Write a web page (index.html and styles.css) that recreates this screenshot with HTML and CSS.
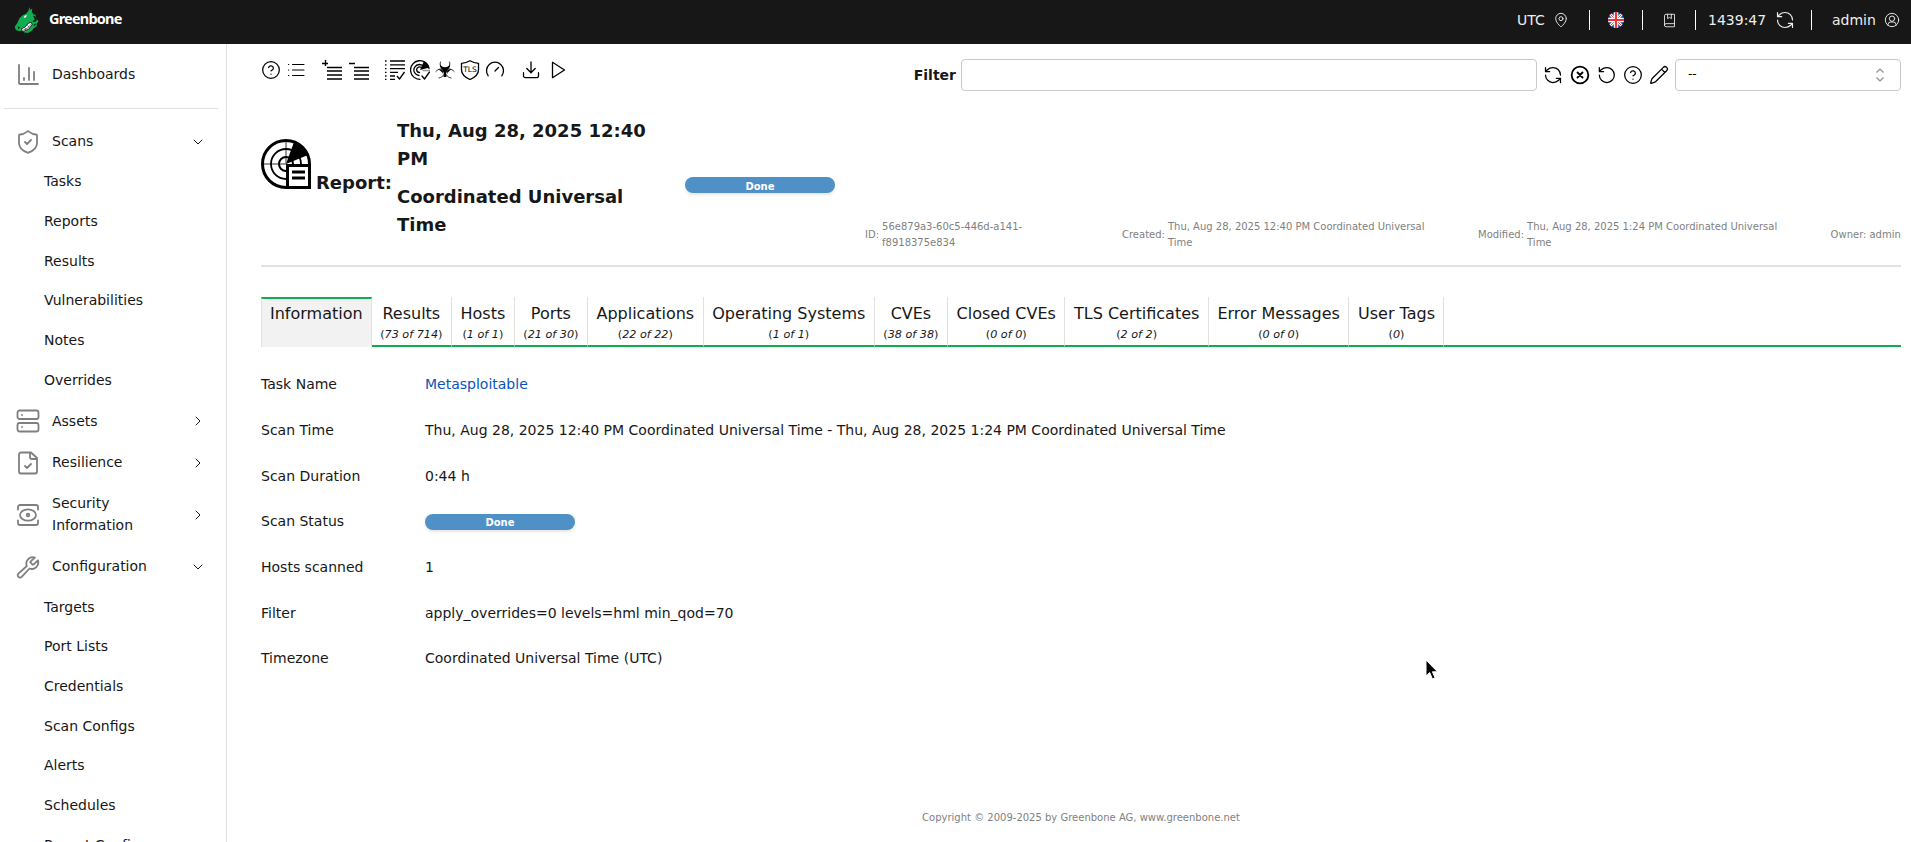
FILE: index.html
```html
<!DOCTYPE html>
<html lang="en">
<head>
<meta charset="utf-8">
<title>Greenbone - Report</title>
<link rel="stylesheet" href="styles.css">
</head>
<body>
<svg class="sprite" aria-hidden="true">
  <symbol id="help" viewBox="0 0 24 24"><circle cx="12" cy="12" r="10"/><path d="M9.1 9a3 3 0 0 1 5.8 1c0 2-2.9 3-2.9 3M12 17h.01"/></symbol>
  <symbol id="refresh" viewBox="0 0 24 24"><path d="M21 12a9 9 0 0 0-9-9 9.75 9.75 0 0 0-6.74 2.74L3 8M3 3v5h5M3 12a9 9 0 0 0 9 9 9.75 9.75 0 0 0 6.74-2.74L21 16M16 16h5v5"/></symbol>
  <symbol id="down" viewBox="0 0 24 24"><path d="m6 9 6 6 6-6"/></symbol>
  <symbol id="right" viewBox="0 0 24 24"><path d="m9 18 6-6-6-6"/></symbol>
</svg>
<header class="topbar">
  <div class="brand">
    <svg class="logo" viewBox="0 0 26 28">
      <path fill="#11ab51" d="M15.500 0 16.200 3 18.500 1.500 18 5 19.500 7.500 22 8 22 11 25 15 23 17 23 20 20 22 18 24.500 14 27 10 26.500 9 24.500 5 25 1.500 24 .3 20.500 3 16.500 5 12 8.500 8.500 12 7 14.500 4Z"/>
      <path fill="#171717" d="m19.500 9 1.500 4-2.500 2.500 3.500-.5 1.500-2-2.500-4ZM3.500 21.500l1.200-1.500.8 1.500-1.200 1.200ZM21.500 17l-2 2 .8.800 2-2Z"/>
      <path fill="#fff" d="m9.500 11.500 1-2.500 2.300-.8-.8 2.500Z"/>
      <path fill="#fff" stroke="#171717" stroke-width=".9" d="m7.500 22.500 3.500-1.700 3.500-4 3-.8.800 2.300-3.300 4.500-5.500 2.500-2-.8Z"/>
      <path fill="none" stroke="#171717" stroke-width=".6" d="m9 24 4.500-2 4-4.500M11 21.500l1 2.500M13.500 19l2 2.500"/>
    </svg>
    <span>Greenbone</span>
  </div>
  <div class="userbar">
    <div class="cell tz"><span>UTC</span><svg class="ic" viewBox="0 0 24 24"><path d="M20 10c0 5-5.500 10.200-7.400 11.800a1 1 0 0 1-1.200 0C9.500 20.200 4 15 4 10a8 8 0 0 1 16 0"/><circle cx="12" cy="10" r="3"/></svg></div>
    <div class="cell flag"><svg viewBox="0 0 16 16"><clipPath id="round"><circle cx="8" cy="8" r="8"/></clipPath><g clip-path="url(#round)"><path fill="#1b4aa5" d="M0 0h16v16H0z"/><path stroke="#fff" stroke-width="2.800" d="m0 0 16 16M16 0 0 16"/><path stroke="#e33" stroke-width="1" d="m0 0 16 16M16 0 0 16"/><path stroke="#fff" stroke-width="4.400" d="M8 0v16M0 8h16"/><path stroke="#e33" stroke-width="2.200" d="M8 0v16M0 8h16"/></g></svg></div>
    <div class="cell book"><svg class="ic" viewBox="0 0 24 24"><path d="M4 19.500v-15A2.500 2.500 0 0 1 6.500 2H20v20H6.500a2.500 2.500 0 0 1 0-5H20M9 2v7l3-2 3 2V2"/></svg></div>
    <div class="cell session"><span>1439:47</span><svg class="ic"><use href="#refresh"/></svg></div>
    <div class="cell user"><span>admin</span><svg class="ic" viewBox="0 0 24 24"><circle cx="12" cy="12" r="10"/><circle cx="12" cy="10" r="4"/><path d="M6 20v-1.500a4 4 0 0 1 4-3.500h4a4 4 0 0 1 4 3.500V20"/></svg></div>
  </div>
</header>
<div class="shell">
  <nav class="sidebar">
    <a class="item dash"><svg class="nav-ic" viewBox="0 0 24 24"><path d="M3 2v18a1 1 0 0 0 1 1h18M8 17v-2M13 17V5M18 17V9"/></svg><span>Dashboards</span></a>
    <hr>
    <a class="item"><svg class="nav-ic" viewBox="0 0 24 24"><path d="M21 13c0 5-4 8-8.600 9.700a1 1 0 0 1-.8 0C7 21 3 18 3 13V5.500a1 1 0 0 1 1-1c2.300 0 5-1.200 7.200-2.900a1.200 1.200 0 0 1 1.600 0C15 3.300 17.700 4.500 20 4.500a1 1 0 0 1 1 1zM9 12l2 2 4-4"/></svg><span>Scans</span><svg class="chev"><use href="#down"/></svg></a>
    <a class="sub">Tasks</a><a class="sub">Reports</a><a class="sub">Results</a><a class="sub">Vulnerabilities</a><a class="sub">Notes</a><a class="sub">Overrides</a>
    <a class="item"><svg class="nav-ic" viewBox="0 0 24 24"><rect x="1.500" y="1.500" width="21" height="8.500" rx="2"/><rect x="1.500" y="14" width="21" height="8.500" rx="2"/><path d="M6 6h.01M6 18h.01"/></svg><span>Assets</span><svg class="chev"><use href="#right"/></svg></a>
    <a class="item"><svg class="nav-ic" viewBox="0 0 24 24"><path d="M15 1.500H5a2 2 0 0 0-2 2v17a2 2 0 0 0 2 2h14a2 2 0 0 0 2-2V7zM14 1.500V6a2 2 0 0 0 2 2h5M9 15l2 2 4-4"/></svg><span>Resilience</span><svg class="chev"><use href="#right"/></svg></a>
    <a class="item"><svg class="nav-ic" viewBox="0 0 24 24"><path d="M2 6.500V4a2 2 0 0 1 2-2h16a2 2 0 0 1 2 2v2.500M2 17.500V20a2 2 0 0 0 2 2h16a2 2 0 0 0 2-2v-2.500"/><ellipse cx="12" cy="12" rx="8" ry="5.700"/><circle cx="12" cy="12" r="1.300"/></svg><span>Security Information</span><svg class="chev"><use href="#right"/></svg></a>
    <a class="item"><svg class="nav-ic" viewBox="0 0 24 24"><path d="M14.700 6.300a1 1 0 0 0 0 1.400l1.600 1.600a1 1 0 0 0 1.400 0l4.200-4a6.500 6.500 0 0 1-8.400 8.200l-7.800 8.400a2.120 2.120 0 0 1-3.200-3.200l8.300-7.700a6.500 6.500 0 0 1 8.100-8.500z"/></svg><span>Configuration</span><svg class="chev"><use href="#down"/></svg></a>
    <a class="sub">Targets</a><a class="sub">Port Lists</a><a class="sub">Credentials</a><a class="sub">Scan Configs</a><a class="sub">Alerts</a><a class="sub">Schedules</a><a class="sub">Report Configs</a>
  </nav>
  <main class="main">
    <div class="tools">
      <div class="icons">
        <div class="group">
          <svg class="ic round"><use href="#help"/></svg>
          <svg class="ic thin" viewBox="0 0 20 20"><path d="M6.500 4.500H18M6.500 10H18M6.500 15.500H18M2.500 4.500h.3M2.500 10h.3M2.500 15.500h.3"/></svg>
        </div>
        <div class="group wide">
          <svg class="ic" viewBox="0 0 20 20"><path d="M0 3.500h6M3.500 0v6M5 7.500h15M5 11h15M5 15h15M5 19h15"/></svg>
          <svg class="ic" viewBox="0 0 20 20"><path d="M0 3.500h6M5 7.500h15M5 11h15M5 15h15M5 19h15"/></svg>
        </div>
        <div class="group">
          <svg class="ic" viewBox="0 0 20 20"><path stroke-linecap="butt" d="M5 1h15M5 4.800h15M5 8.600h15M5 12.400h8M5 16h5M5 19.300h5M0 1h1.500M0 4.800h1.500M0 8.600h1.500M0 12.400h1.500M0 16h1.500M0 19.300h1.500M12 16l2.500 3L19.500 12"/></svg>
          <svg class="ic" viewBox="0 0 20 20"><path d="M19 8.500A9.300 9.300 0 1 0 10 19.300M14 7A5.500 5.500 0 1 0 9 15.500M12 8.500A2.800 2.800 0 1 0 9.500 12.500M12 16l2.500 3L19.500 12"/><path fill="#000" stroke="none" d="m10 10 4-9Q18 3 19.500 7.500Z"/><path stroke="#999" d="M13 10.500h6.500"/></svg>
          <svg class="ic bio" viewBox="0 0 20 20"><path d="M5.500 2C4 5.500 6.500 8.500 10 8.500S16 5.500 14.500 2M.8 11.500c3-3.500 7-3 8.200-.5s-.5 6-5 7M19.200 11.500c-3-3.500-7-3-8.200-.5s.5 6 5 7"/><path fill="#000" stroke="none" d="M5 4c1 2.500 3 3.200 5 3.200S14 6.500 15 4c.3 3-.8 4.500-2.300 5.500L11 13.500l.5 3.500h-3l.5-3.500-1.700-4C5.800 8.500 4.700 7 5 4ZM3 9.500q4-1 5 1.500l-.5 3q-.5-3-4.500-4.500ZM17 9.500q-4-1-5 1.500l.5 3q.5-3 4.500-4.500Z"/></svg>
          <svg class="ic" viewBox="0 0 20 20"><path d="M10 .8c2.600 1.700 5.400 2.400 8.500 2.500v6.500c0 4.500-3.500 7.600-8.500 9.700-5-2.100-8.500-5.200-8.500-9.700V3.300C4.600 3.200 7.400 2.500 10 .8Z"/><text x="10" y="11.800" text-anchor="middle">TLS</text></svg>
          <svg class="ic" viewBox="0 0 20 20"><path d="M3.200 15.800a8.500 8.500 0 1 1 13.600 0M10 11l3.500-3.500"/></svg>
        </div>
        <div class="group last">
          <svg class="ic" viewBox="0 0 20 20"><path d="M10 2v10.500M5.800 8.500 10 12.700l4.200-4.200M2.500 12.700v3a2 2 0 0 0 2 2h11a2 2 0 0 0 2-2v-3"/></svg>
          <svg class="ic" viewBox="0 0 20 20"><path d="M6.500 2.300v15.400L18.500 10Z"/></svg>
        </div>
      </div>
      <div class="filter">
        <label>Filter</label>
        <div class="field"></div>
        <div class="filter-icons">
          <svg class="ic"><use href="#refresh"/></svg>
          <svg class="ic bold" viewBox="0 0 24 24"><circle cx="12" cy="12" r="10"/><path d="m15 9-6 6M9 9l6 6"/></svg>
          <svg class="ic" viewBox="0 0 24 24"><path d="M4 12a9 9 0 1 0 9-9 9.750 9.750 0 0 0-6.740 2.740L4 8M4 3v5h5"/></svg>
          <svg class="ic"><use href="#help"/></svg>
          <svg class="ic" viewBox="0 0 24 24"><path d="M21.170 6.830a1 1 0 0 0-4-4L3.840 16.170a2 2 0 0 0-.5.830l-1.320 4.350a.5.5 0 0 0 .62.620l4.350-1.320a2 2 0 0 0 .83-.5zM15 5l4 4"/></svg>
        </div>
        <div class="select"><span>--</span><svg viewBox="0 0 10 14"><path d="m1.500 4.500 3.500-3.500 3.500 3.500M1.500 9.500 5 13l3.500-3.500"/></svg></div>
      </div>
    </div>
    <section class="head">
      <svg class="report-ic" viewBox="0 0 50 50">
        <g fill="none" stroke="#000"><path stroke="#777" stroke-width="1.500" d="M25 3v22M3 25h22"/><circle cx="25" cy="25" r="7" stroke-width="2"/><circle cx="25" cy="25" r="15" stroke-width="1.800"/><path stroke-width="3" d="M48.500 26V25A23.500 23.500 0 1 0 25 48.500"/></g>
        <path d="m25 25 8-22q9 3 14 13Z"/><path fill="#fff" stroke="#000" stroke-width="3" d="M26.500 26.500h22v22h-22z"/><path stroke="#000" stroke-width="2.800" d="M31 33h13M31 39h13"/>
      </svg>
      <h2 class="kind">Report:</h2>
      <h2 class="when"><span>Thu, Aug 28, 2025 12:40 PM</span><span>Coordinated Universal Time</span></h2>
      <div class="pill">Done</div>
      <dl class="meta">
        <div class="m-id"><dt>ID:</dt><dd>56e879a3-60c5-446d-a141-f8918375e834</dd></div>
        <div class="m-created"><dt>Created:</dt><dd>Thu, Aug 28, 2025 12:40 PM Coordinated Universal Time</dd></div>
        <div class="m-mod"><dt>Modified:</dt><dd>Thu, Aug 28, 2025 1:24 PM Coordinated Universal Time</dd></div>
        <div class="m-owner"><dt>Owner:</dt><dd>admin</dd></div>
      </dl>
    </section>
    <div class="tabs">
      <div class="tab active">Information</div>
      <div class="tab">Results<small>(<i>73 of 714</i>)</small></div>
      <div class="tab">Hosts<small>(<i>1 of 1</i>)</small></div>
      <div class="tab">Ports<small>(<i>21 of 30</i>)</small></div>
      <div class="tab">Applications<small>(<i>22 of 22</i>)</small></div>
      <div class="tab">Operating Systems<small>(<i>1 of 1</i>)</small></div>
      <div class="tab">CVEs<small>(<i>38 of 38</i>)</small></div>
      <div class="tab">Closed CVEs<small>(<i>0 of 0</i>)</small></div>
      <div class="tab">TLS Certificates<small>(<i>2 of 2</i>)</small></div>
      <div class="tab">Error Messages<small>(<i>0 of 0</i>)</small></div>
      <div class="tab">User Tags<small>(<i>0</i>)</small></div>
      <div class="rest"></div>
    </div>
    <dl class="info">
      <dt>Task Name</dt><dd><a>Metasploitable</a></dd>
      <dt>Scan Time</dt><dd>Thu, Aug 28, 2025 12:40 PM Coordinated Universal Time - Thu, Aug 28, 2025 1:24 PM Coordinated Universal Time</dd>
      <dt>Scan Duration</dt><dd>0:44 h</dd>
      <dt>Scan Status</dt><dd class="status"><div class="pill">Done</div></dd>
      <dt>Hosts scanned</dt><dd>1</dd>
      <dt>Filter</dt><dd>apply_overrides=0 levels=hml min_qod=70</dd>
      <dt>Timezone</dt><dd>Coordinated Universal Time (UTC)</dd>
    </dl>
    <footer>Copyright © 2009-2025 by Greenbone AG, www.greenbone.net</footer>
  </main>
</div>
<svg class="cursor" viewBox="0 0 14 22"><path fill="#000" stroke="#fff" d="M1 1v16l3.700-3.500L7.400 20l2.700-1.200-2.700-6H12.500Z"/></svg>
</body>
</html>
```

FILE: styles.css
```css
* { box-sizing: border-box; }
body { margin: 0; height: 842px; overflow: hidden; background: #fff; color: #171717; font: 14px/21.7px "DejaVu Sans", sans-serif; }
.sprite { display: none; }
svg { display: block; flex: none; }
dl, dd, dt, h2 { margin: 0; }
.ic { width: 20px; height: 20px; fill: none; stroke: currentColor; stroke-width: 1.5; stroke-linecap: round; stroke-linejoin: round; }

.topbar { height: 44px; background: #171717; color: #fff; display: flex; justify-content: space-between; }
.brand { display: flex; align-items: flex-start; padding: 7px 0 0 14px; gap: 9px; }
.logo { width: 26px; height: 27px; }
.brand span { font: 700 14.5px/22px "Noto Sans", sans-serif; letter-spacing: -.8px; }
.userbar { display: flex; align-items: flex-start; padding: 10px 10px 0 0; color: #eee; }
.cell { display: flex; align-items: center; height: 20px; border-left: 1px solid #fff; }
.cell span { padding-top: 1px; }
.cell .ic { stroke-width: 1.4; }
.tz { border: 0; width: 72px; gap: 8px; }
.tz .ic, .user .ic { width: 16px; height: 16px; }
.flag { width: 53px; padding-left: 18px; }
.flag svg { width: 16px; height: 16px; }
.book { width: 53px; padding-left: 19px; }
.book .ic { width: 15px; height: 15px; }
.session { width: 116px; padding-left: 12px; gap: 9px; }
.user { width: 90px; padding-left: 20px; gap: 8px; }

.shell { display: flex; height: 798px; }
.sidebar { width: 227px; flex: none; border-right: 1px solid #e1e1e1; overflow: hidden; }
.item { display: flex; align-items: center; padding: 10.2px 20px 9.5px 16px; }
.item span { flex: 1; margin-left: 12px; max-width: 118px; }
.nav-ic { width: 24px; height: 24px; margin: -2px 0; fill: none; stroke: #7f7f7f; stroke-width: 1.8; stroke-linecap: round; stroke-linejoin: round; }
.chev { width: 16px; height: 16px; margin-left: auto; fill: none; stroke: #171717; stroke-width: 1.5; stroke-linecap: round; stroke-linejoin: round; }
.dash { margin-top: 9.8px; }
.sidebar hr { border: 0; border-top: 1px solid #e1e1e1; margin: 13px 8px 11.6px 4px; }
.sub { display: block; padding: 9px 0 9px 44px; }

.main { flex: 1; min-width: 0; padding: 0 10px 0 34px; display: flex; flex-direction: column; }
.tools { display: flex; justify-content: space-between; padding-top: 15px; color: #000; }
.icons { display: flex; gap: 16px; padding-top: 1px; }
.icons .ic { stroke-width: 1.3; }
.icons .round { stroke-width: 1.5; }
.icons .wide .ic { stroke-width: 1.4; stroke-linecap: butt; }
.icons .thin { stroke-width: 1.1; }
.icons .bio { stroke-width: .8; }
.icons text { font: 7.5px "DejaVu Sans", sans-serif; fill: #000; stroke: none; }
.group { display: flex; gap: 5px; }
.group.wide { gap: 7px; }
.filter { display: flex; align-items: center; }
.filter label { font-weight: 700; color: #171717; margin-right: 5px; padding-top: 1px; }
.field { width: 576px; height: 32px; border: 1px solid #c9c9c9; border-radius: 4px; }
.filter-icons { display: flex; gap: 6.5px; margin: 0 6px; }
.bold { stroke-width: 2.2; }
.select { width: 226px; height: 32px; border: 1px solid #c9c9c9; border-radius: 4px; display: flex; justify-content: space-between; align-items: center; padding: 0 15px 0 12px; font-size: 12px; }
.select svg { width: 10px; height: 14px; fill: none; stroke: #868e96; stroke-width: 1.2; }

.head { display: flex; height: 176px; border-bottom: 2px solid #e3e3e3; padding-top: 27px; }
.report-ic { width: 50px; height: 50px; margin-top: 21px; }
h2 { font-size: 18px; line-height: 27.9px; }
.kind { margin: 51px 0 0 5px; width: 75px; }
.when { margin-left: 6px; width: 288px; padding-right: 30px; display: flex; flex-direction: column; gap: 10px; margin-top: -1px; }
.pill { width: 150px; height: 16px; border-radius: 8px; background: #4f91c7; box-shadow: 0 2px 3px #0000001a; color: #fff; font: 700 10px/18px "DejaVu Sans", sans-serif; text-align: center; flex: none; }
.head .pill { margin-top: 59px; line-height: 19px; }
.meta { display: flex; align-items: center; align-self: flex-start; margin: 101px 0 0 30px; flex: 1; font-size: 10px; line-height: 15.5px; color: #7f7f7f; }
.meta div { display: flex; align-items: center; gap: 3px; }
.m-id { width: 257px; }
.m-id dd { width: 150px; }
.m-created { width: 356px; }
.m-created dd { width: 275px; }
.m-mod { width: 352.6px; }
.m-mod dd { width: 265px; }
.meta dd, .meta dt { flex: none; }

.tabs { display: flex; height: 50px; margin-top: 30px; }
.tab { border-right: 1px solid #e1e1e1; border-bottom: 2px solid #11ab51; padding: 5px 8.5px 0 8.55px; font-size: 16px; line-height: 24.8px; text-align: center; white-space: nowrap; }
.tab.active { border-top: 2px solid #11ab51; border-bottom: 0; border-left: 1px solid #e1e1e1; background: #f2f2f2; padding: 3px 8px 0; }
.tab small { display: block; font-size: 11.2px; line-height: 17.4px; margin-top: -1px; }
.rest { flex: 1; border-bottom: 2px solid #11ab51; }

.info { display: grid; grid-template-columns: 164px 1fr; row-gap: 24px; margin-top: 27.3px; line-height: 21.7px; }
.info dt, .info dd { height: 21.7px; }
.info a { color: #0a53b8; }
.info .status { padding-top: 2.6px; }
footer { margin-top: auto; padding-bottom: 17px; text-align: center; font-size: 10px; line-height: 15.5px; color: #7f7f7f; }
.cursor { position: absolute; left: 1425px; top: 659px; width: 14px; height: 22px; }
```
